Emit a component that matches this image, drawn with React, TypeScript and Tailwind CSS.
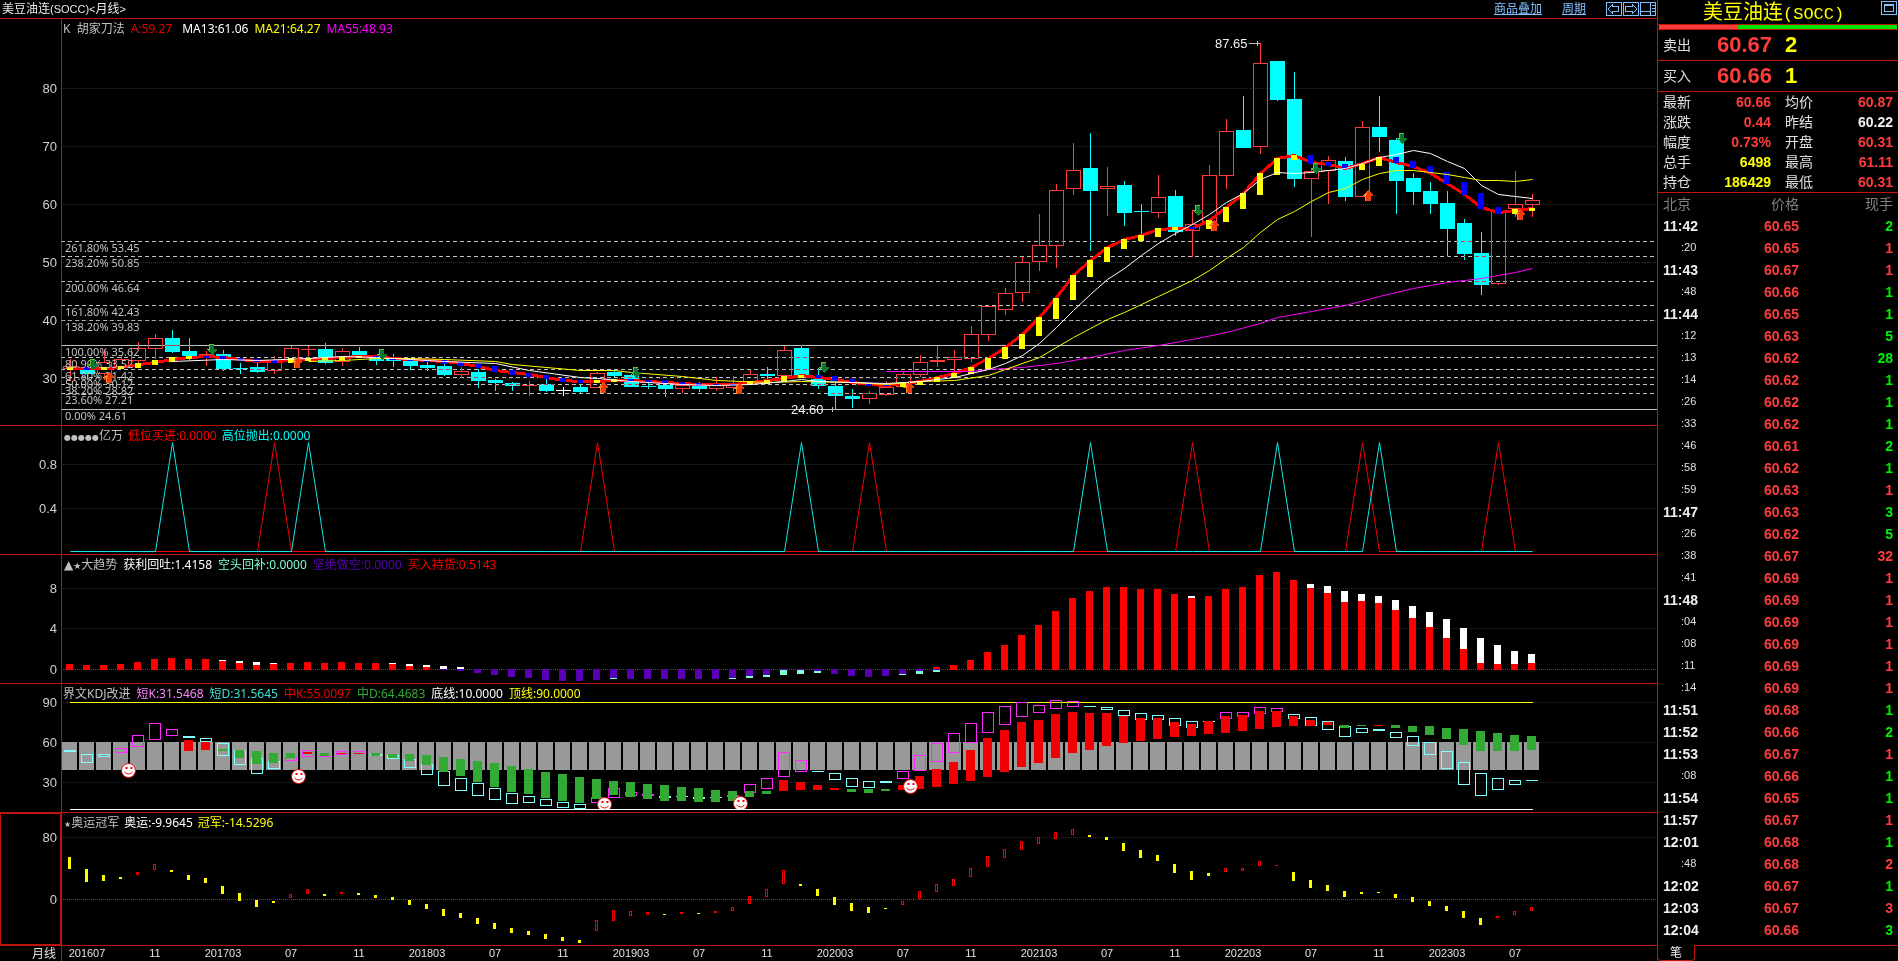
import React from "react";
import clsx from "clsx";

type Kind = "u" | "d" | "w";
type Candle = [number, number, number, number, Kind];
type Span = [number, number, string];
type Point = [number, number];

const STEP = 17;
const x = (i: number) => 70 + STEP * i;

// high, body top, body bottom, low
const candles: Candle[] = [
  [359, 366, 369, 381, "u"], [366, 369, 374, 380, "d"], [349, 362, 374, 380, "u"], [355, 359, 368, 368, "u"],
  [342, 348, 361, 364, "u"], [334, 338, 349, 359, "u"], [330, 338, 352, 353, "d"], [338, 351, 356, 360, "d"],
  [351, 354, 356, 366, "u"], [350, 354, 369, 371, "d"], [363, 368, 369, 374, "d"], [359, 367, 372, 373, "d"],
  [356, 362, 371, 374, "u"], [346, 348, 361, 362, "u"], [346, 349, 350, 358, "u"], [343, 349, 363, 364, "d"],
  [348, 351, 362, 366, "u"], [347, 351, 356, 356, "d"], [355, 355, 361, 365, "d"], [354, 359, 361, 367, "d"],
  [359, 359, 366, 370, "d"], [362, 365, 368, 371, "d"], [364, 366, 375, 376, "d"], [367, 371, 375, 378, "u"],
  [369, 372, 381, 388, "d"], [379, 380, 383, 391, "d"], [382, 383, 386, 391, "d"], [381, 385, 386, 396, "u"],
  [379, 384, 391, 392, "d"], [387, 390, 391, 396, "w"], [385, 387, 392, 393, "d"], [372, 373, 388, 388, "u"],
  [370, 372, 376, 377, "d"], [374, 375, 387, 387, "d"], [383, 386, 387, 389, "d"], [385, 385, 389, 397, "d"],
  [383, 385, 389, 393, "u"], [382, 385, 389, 392, "d"], [377, 385, 389, 391, "u"], [376, 385, 388, 391, "u"],
  [370, 374, 384, 385, "u"], [367, 374, 376, 381, "d"], [346, 350, 376, 378, "u"], [345, 348, 377, 378, "d"],
  [368, 379, 386, 389, "d"], [383, 386, 396, 409, "d"], [389, 396, 399, 408, "d"], [391, 393, 399, 404, "u"],
  [381, 387, 395, 396, "u"], [371, 374, 387, 388, "u"], [355, 362, 375, 377, "u"], [346, 360, 362, 367, "u"],
  [350, 357, 360, 373, "u"], [326, 334, 359, 362, "u"], [306, 306, 335, 341, "u"], [288, 293, 310, 315, "u"],
  [257, 262, 293, 302, "u"], [214, 245, 262, 271, "u"], [184, 190, 246, 268, "u"], [143, 170, 189, 195, "u"],
  [133, 168, 191, 251, "d"], [167, 186, 189, 216, "u"], [181, 185, 213, 226, "d"], [204, 211, 212, 235, "d"],
  [175, 197, 213, 218, "u"], [190, 196, 232, 236, "d"], [210, 224, 231, 257, "u"], [165, 175, 222, 227, "u"],
  [119, 131, 176, 189, "u"], [96, 130, 148, 148, "d"], [43, 63, 147, 154, "u"], [61, 61, 100, 101, "d"],
  [72, 99, 179, 187, "d"], [169, 171, 179, 237, "u"], [156, 160, 171, 204, "u"], [157, 161, 197, 201, "d"],
  [121, 127, 197, 197, "u"], [96, 127, 137, 152, "d"], [138, 140, 181, 214, "d"], [173, 178, 192, 205, "d"],
  [182, 191, 204, 214, "d"], [191, 203, 229, 257, "d"], [219, 223, 254, 260, "d"], [232, 253, 285, 295, "d"],
  [211, 211, 284, 285, "u"], [171, 204, 209, 217, "u"], [194, 200, 205, 217, "u"],
];

const trendLine = [
  368, 368, 368, 367, 364, 362, 359, 357, 356, 357, 359, 361, 361, 360, 359, 358, 357, 356, 356, 358, 359, 360, 361,
  363, 366, 370, 372, 374, 377, 380, 381, 381, 380, 380, 381, 382, 383, 384, 384, 384, 382, 380, 378, 375, 377, 379,
  382, 384, 385, 383, 381, 377, 373, 367, 358, 347, 334, 317, 297, 275, 260, 247, 239, 235, 229, 228, 228, 220, 207,
  193, 173, 158, 155, 162, 164, 168, 163, 157, 162, 166, 173, 183, 194, 207, 212, 210, 208,
];

const trendBars: Span[] = [
  [367, 369, "y"], [367, 369, "b"], [367, 369, "y"], [366, 368, "y"], [363, 367, "y"], [360, 364, "y"],
  [357, 361, "y"], [356, 358, "y"], [356, 357, "b"], [356, 359, "b"], [358, 360, "b"], [359, 361, "b"],
  [360, 362, "b"], [358, 362, "y"], [358, 360, "y"], [357, 359, "y"], [357, 359, "y"], [356, 357, "y"],
  [356, 358, "b"], [358, 359, "b"], [359, 360, "b"], [360, 361, "b"], [360, 363, "b"], [362, 365, "b"],
  [364, 367, "b"], [366, 371, "b"], [370, 374, "b"], [373, 376, "b"], [375, 378, "b"], [378, 381, "b"],
  [380, 382, "b"], [380, 382, "y"], [379, 381, "y"], [379, 381, "b"], [380, 382, "b"], [380, 383, "b"],
  [382, 384, "b"], [383, 385, "b"], [384, 385, "b"], [384, 385, "b"], [381, 384, "y"], [380, 383, "y"],
  [376, 380, "y"], [375, 377, "y"], [375, 377, "b"], [376, 380, "b"], [379, 382, "b"], [382, 385, "b"],
  [384, 385, "b"], [383, 386, "y"], [381, 384, "y"], [377, 381, "y"], [373, 377, "y"], [367, 373, "y"],
  [358, 368, "y"], [347, 358, "y"], [334, 348, "y"], [317, 335, "y"], [298, 318, "y"], [275, 299, "y"],
  [260, 276, "y"], [247, 261, "y"], [239, 248, "y"], [235, 240, "y"], [228, 236, "y"], [227, 229, "y"],
  [227, 228, "b"], [220, 228, "y"], [207, 221, "y"], [193, 208, "y"], [173, 194, "y"], [158, 174, "y"],
  [155, 159, "y"], [155, 163, "b"], [162, 165, "b"], [164, 168, "b"], [164, 169, "y"], [157, 165, "y"],
  [157, 162, "b"], [161, 167, "b"], [166, 172, "b"], [172, 183, "b"], [182, 194, "b"], [193, 208, "b"],
  [207, 213, "b"], [209, 213, "y"], [208, 210, "y"],
];

const ma13: Point[] = [
  [6, 361], [9, 359], [11, 360], [14, 358], [16, 356], [18, 357], [20, 359], [22, 361], [25, 363], [27, 370],
  [30, 377], [31, 378], [33, 381], [36, 384], [38, 385], [40, 384], [42, 381], [43, 379], [44, 381], [46, 382],
  [48, 383], [50, 381], [52, 377], [54, 369], [55, 363], [56, 355], [57, 343], [58, 327], [59, 310], [60, 294],
  [61, 279], [62, 268], [63, 255], [64, 243], [65, 233], [66, 224], [67, 214], [68, 202], [69, 193], [70, 179],
  [71, 172], [72, 173], [73, 172], [74, 170], [75, 168], [76, 163], [77, 157], [78, 154], [79, 150], [80, 153],
  [81, 161], [82, 168], [83, 185], [84, 194], [85, 196], [86, 198],
];
const ma21: Point[] = [
  [14, 361], [16, 360], [18, 358], [20, 358], [22, 359], [25, 361], [26, 364], [30, 370], [32, 370], [33, 372],
  [36, 376], [38, 380], [41, 382], [43, 381], [46, 382], [48, 384], [50, 381], [52, 380], [54, 375], [55, 369],
  [57, 357], [58, 347], [59, 337], [60, 328], [61, 319], [62, 312], [63, 304], [64, 296], [65, 288], [66, 280],
  [67, 270], [68, 258], [69, 247], [70, 232], [71, 219], [72, 211], [73, 201], [74, 192], [75, 188], [76, 179],
  [77, 173], [78, 170], [79, 170], [80, 172], [81, 174], [82, 177], [83, 180], [84, 180], [85, 181], [86, 179],
];
const ma55: Point[] = [
  [48, 371], [53, 371], [54, 369], [56, 367], [58, 363], [60, 357], [62, 350], [64, 345], [66, 339], [68, 332],
  [70, 323], [71, 317], [73, 311], [75, 305], [77, 296], [79, 288], [81, 282], [83, 278], [85, 272], [86, 268],
];

const fibs: [number, string][] = [
  [241, "261.80% 53.45"], [256, "238.20% 50.85"], [281, "200.00% 46.64"], [305, "161.80% 42.43"],
  [320, "138.20% 39.83"], [345, "100.00% 35.62"], [357, "80.90% 33.52"], [369, "61.80% 31.42"],
  [377, "50.00% 30.12"], [384, "38.20% 28.82"], [393, "23.60% 27.21"], [409, "0.00% 24.61"],
];

const sells: Point[] = [[93, 364], [212, 349], [382, 354], [636, 372], [824, 367], [1198, 210], [1316, 168], [1402, 138]];
const buys: Point[] = [[109, 378], [297, 363], [603, 388], [739, 389], [909, 388], [1214, 226], [1368, 196], [1520, 215]];

const highSignals = [6, 14, 43, 60, 71, 77];
const lowSignals = [12, 31, 47, 66, 76, 84];

// white top, red top
const rises: [number, number, number][] = [
  [0, 664, 664], [1, 665, 665], [2, 665, 665], [3, 664, 664], [4, 662, 662], [5, 659, 659], [6, 658, 658],
  [7, 659, 659], [8, 659, 659], [9, 660, 661], [10, 661, 663], [11, 662, 665], [12, 663, 664], [13, 663, 663],
  [14, 662, 662], [15, 663, 663], [16, 662, 662], [17, 663, 663], [18, 663, 663], [19, 663, 664], [20, 664, 666],
  [21, 665, 667], [22, 666, 669], [23, 667, 669], [51, 667, 667], [52, 665, 665], [53, 660, 660], [54, 652, 652],
  [55, 645, 645], [56, 635, 635], [57, 625, 625], [58, 611, 611], [59, 598, 598], [60, 591, 591], [61, 587, 587],
  [62, 587, 587], [63, 589, 589], [64, 589, 589], [65, 594, 594], [66, 596, 598], [67, 596, 596], [68, 589, 589],
  [69, 587, 587], [70, 575, 575], [71, 572, 572], [72, 580, 580], [73, 584, 588], [74, 586, 593], [75, 591, 602],
  [76, 594, 601], [77, 596, 603], [78, 600, 610], [79, 606, 618], [80, 612, 627], [81, 619, 638], [82, 628, 649],
  [83, 638, 663], [84, 645, 664], [85, 651, 664], [86, 654, 663],
];
// purple bottom, green bottom
const falls: [number, number, number][] = [
  [22, 670, 670], [23, 671, 671], [24, 673, 673], [25, 675, 675], [26, 677, 677], [27, 678, 678], [28, 680, 680],
  [29, 681, 681], [30, 681, 681], [31, 680, 680], [32, 678, 679], [33, 679, 679], [34, 679, 679], [35, 679, 679],
  [36, 679, 679], [37, 679, 679], [38, 679, 679], [39, 678, 679], [40, 676, 678], [41, 675, 677], [42, 670, 675],
  [43, 670, 674], [44, 671, 673], [45, 674, 674], [46, 676, 676], [47, 677, 677], [48, 676, 676], [49, 674, 675],
  [50, 671, 674], [51, 670, 672],
];

const shortKd: Span[] = [
  [750, 752, "c"], [754, 763, "c"], [754, 757, "c"], [748, 753, "m"], [735, 747, "m"], [723, 740, "m"],
  [729, 736, "m"], [736, 738, "c"], [738, 742, "c"], [743, 756, "c"], [750, 765, "c"], [758, 774, "c"],
  [761, 769, "c"], [757, 761, "m"], [750, 757, "m"], [756, 757, "m"], [751, 755, "m"], [751, 754, "m"],
  [754, 756, "c"], [755, 759, "c"], [759, 768, "c"], [764, 775, "c"], [771, 786, "c"], [778, 791, "c"],
  [783, 796, "c"], [788, 800, "c"], [793, 804, "c"], [796, 803, "c"], [799, 806, "c"], [802, 808, "c"],
  [804, 809, "c"], [797, 803, "m"], [788, 798, "m"], [792, 796, "m"], [794, 796, "m"], [796, 798, "c"],
  [796, 797, "c"], [797, 799, "c"], [797, 798, "c"], [795, 797, "m"], [784, 793, "m"], [778, 789, "m"],
  [752, 777, "m"], [760, 772, "m"], [771, 772, "c"], [773, 780, "c"], [778, 787, "c"], [781, 788, "c"],
  [781, 783, "c"], [771, 779, "m"], [755, 771, "m"], [743, 762, "m"], [733, 753, "m"], [723, 743, "m"],
  [712, 733, "m"], [706, 725, "m"], [702, 717, "m"], [705, 713, "m"], [700, 709, "m"], [701, 707, "m"],
  [706, 707, "c"], [707, 710, "c"], [710, 716, "c"], [713, 720, "c"], [715, 720, "c"], [718, 726, "c"],
  [721, 728, "c"], [721, 722, "c"], [712, 719, "m"], [712, 717, "m"], [707, 714, "m"], [708, 712, "m"],
  [714, 719, "c"], [717, 726, "c"], [721, 730, "c"], [726, 737, "c"], [728, 733, "c"], [729, 731, "c"],
  [732, 738, "c"], [736, 746, "c"], [742, 755, "c"], [751, 769, "c"], [762, 785, "c"], [773, 796, "c"],
  [778, 790, "c"], [780, 785, "c"], [780, 781, "c"],
];

// starts at the 8th month
const midKd: Span[] = [
  [740, 751, "r"], [742, 750, "r"], [749, 751, "g"], [750, 758, "g"], [751, 764, "g"], [753, 763, "g"],
  [753, 758, "g"], [752, 754, "r"], [753, 756, "g"], [753, 754, "r"], [753, 754, "r"], [753, 756, "g"],
  [754, 758, "g"], [754, 761, "g"], [755, 765, "g"], [757, 772, "g"], [759, 776, "g"], [761, 782, "g"],
  [763, 787, "g"], [766, 792, "g"], [769, 794, "g"], [772, 798, "g"], [774, 801, "g"], [777, 803, "g"],
  [779, 799, "g"], [781, 795, "g"], [782, 797, "g"], [784, 799, "g"], [785, 801, "g"], [787, 801, "g"],
  [788, 802, "g"], [790, 802, "g"], [791, 801, "g"], [791, 797, "g"], [791, 794, "g"], [780, 791, "r"],
  [782, 790, "r"], [785, 790, "r"], [788, 790, "r"], [789, 792, "g"], [789, 793, "g"], [789, 791, "g"],
  [785, 790, "r"], [776, 789, "r"], [769, 787, "r"], [762, 784, "r"], [750, 781, "r"], [738, 777, "r"],
  [730, 772, "r"], [722, 767, "r"], [720, 763, "r"], [714, 758, "r"], [712, 753, "r"], [713, 750, "r"],
  [713, 746, "r"], [716, 743, "r"], [718, 741, "r"], [718, 739, "r"], [722, 737, "r"], [724, 736, "r"],
  [721, 734, "r"], [716, 733, "r"], [715, 731, "r"], [711, 729, "r"], [711, 727, "r"], [716, 726, "r"],
  [720, 726, "r"], [722, 725, "r"], [725, 728, "g"], [725, 726, "g"], [725, 726, "r"], [725, 728, "g"],
  [726, 732, "g"], [726, 735, "g"], [728, 739, "g"], [729, 745, "g"], [731, 751, "g"], [733, 751, "g"],
  [735, 751, "g"], [736, 750, "g"],
];

const smileys: Point[] = [[128, 770], [298, 776], [604, 804], [740, 803], [910, 786]];

const champion: Span[] = [
  [857, 869, "y"], [869, 882, "y"], [875, 881, "y"], [877, 879, "y"], [872, 875, "r"], [864, 870, "r"],
  [870, 872, "y"], [875, 880, "y"], [878, 883, "y"], [886, 894, "y"], [893, 901, "y"], [900, 907, "y"],
  [901, 903, "y"], [894, 898, "r"], [889, 894, "r"], [894, 896, "y"], [892, 894, "r"], [893, 895, "y"],
  [895, 898, "y"], [897, 900, "y"], [900, 905, "y"], [904, 909, "y"], [909, 916, "y"], [913, 918, "y"],
  [918, 924, "y"], [923, 929, "y"], [928, 933, "y"], [931, 935, "y"], [934, 939, "y"], [937, 941, "y"],
  [940, 943, "y"], [920, 931, "r"], [910, 921, "r"], [911, 916, "r"], [912, 915, "r"], [914, 915, "y"],
  [912, 914, "r"], [913, 914, "y"], [911, 913, "r"], [907, 911, "r"], [896, 904, "r"], [889, 897, "r"],
  [870, 884, "r"], [884, 886, "y"], [889, 896, "y"], [897, 905, "y"], [903, 911, "y"], [907, 913, "y"],
  [908, 909, "y"], [901, 905, "r"], [891, 899, "r"], [884, 892, "r"], [879, 886, "r"], [868, 877, "r"],
  [856, 867, "r"], [849, 858, "r"], [841, 850, "r"], [837, 844, "r"], [832, 839, "r"], [829, 835, "r"],
  [835, 837, "y"], [837, 840, "y"], [843, 851, "y"], [850, 858, "y"], [855, 861, "y"], [864, 873, "y"],
  [871, 880, "y"], [873, 876, "y"], [868, 872, "r"], [868, 871, "r"], [861, 866, "r"], [865, 866, "r"],
  [872, 881, "y"], [880, 888, "y"], [885, 891, "y"], [891, 897, "y"], [892, 894, "y"], [892, 893, "y"],
  [894, 898, "y"], [897, 902, "y"], [901, 906, "y"], [906, 911, "y"], [911, 918, "y"], [918, 925, "y"],
  [916, 918, "r"], [911, 915, "r"], [907, 911, "r"],
];

const quotes = [
  ["最新", "60.66", "text-[#ff3c3c]", "均价", "60.87", "text-[#ff3c3c]"],
  ["涨跌", "0.44", "text-[#ff3c3c]", "昨结", "60.22", "text-[#f0f0f0]"],
  ["幅度", "0.73%", "text-[#ff3c3c]", "开盘", "60.31", "text-[#ff3c3c]"],
  ["总手", "6498", "text-[#ffff00]", "最高", "61.11", "text-[#ff3c3c]"],
  ["持仓", "186429", "text-[#ffff00]", "最低", "60.31", "text-[#ff3c3c]"],
];

// time, price, volume, side
const ticks: [string, string, number, "b" | "s"][] = [
  ["11:42", "60.65", 2, "s"], [":20", "60.65", 1, "b"], ["11:43", "60.67", 1, "b"], [":48", "60.66", 1, "s"],
  ["11:44", "60.65", 1, "s"], [":12", "60.63", 5, "s"], [":13", "60.62", 28, "s"], [":14", "60.62", 1, "s"],
  [":26", "60.62", 1, "s"], [":33", "60.62", 1, "s"], [":46", "60.61", 2, "s"], [":58", "60.62", 1, "s"],
  [":59", "60.63", 1, "b"], ["11:47", "60.63", 3, "s"], [":26", "60.62", 5, "s"], [":38", "60.67", 32, "b"],
  [":41", "60.69", 1, "b"], ["11:48", "60.69", 1, "b"], [":04", "60.69", 1, "b"], [":08", "60.69", 1, "b"],
  [":11", "60.69", 1, "b"], [":14", "60.69", 1, "b"], ["11:51", "60.68", 1, "s"], ["11:52", "60.66", 2, "s"],
  ["11:53", "60.67", 1, "b"], [":08", "60.66", 1, "s"], ["11:54", "60.65", 1, "s"], ["11:57", "60.67", 1, "b"],
  ["12:01", "60.68", 1, "s"], [":48", "60.68", 2, "b"], ["12:02", "60.67", 1, "s"], ["12:03", "60.67", 3, "b"],
  ["12:04", "60.66", 3, "s"],
];

const path = (points: Point[]) => points.map(([i, y]) => `${x(i) + 0.5},${y + 0.5}`).join(" ");

const spikes = (signals: number[]) =>
  path(candles.map((_, i) => [i, signals.includes(i) ? 442 : 551] as Point));

const months = Array.from({ length: 22 }, (_, k) => ({
  i: 1 + 4 * k,
  label: k === 0 ? "201607" : k % 3 === 0 ? "07" : k % 3 === 1 ? "11" : `${2017 + (k - 2) / 3}03`,
}));

const Box = ({ left, top, width, height, color }: { left: number; top: number; width: number; height: number; color: string }) =>
  height > 2 ? (
    <rect x={left + 0.5} y={top + 0.5} width={width - 1} height={height - 1} fill="none" stroke={color} />
  ) : (
    <rect x={left} y={top} width={width} height={height} fill={color} />
  );

const Legend = ({ items }: { items: [string, string][] }) => (
  <div className="absolute left-[63px] top-0.5 flex gap-1.5 whitespace-nowrap leading-4">
    {items.map(([text, color]) => (
      <span key={text} className={color}>
        {text}
      </span>
    ))}
  </div>
);

const Panel = ({
  top,
  className,
  grid,
  legend,
  children,
}: {
  top: number;
  className: string;
  grid: [number, string, boolean?][];
  legend: React.ReactNode;
  children: React.ReactNode;
}) => (
  <section className="relative border-t border-[#be1409]">
    <svg className={clsx("block w-full", className)} shapeRendering="crispEdges">
      <g transform={`translate(0,${-top})`}>
        {grid.map(([y, label, bright]) => (
          <g key={label}>
            <line x1="63" x2="100%" y1={y + 0.5} y2={y + 0.5} stroke={bright ? "#d01810" : "#8c0000"} strokeDasharray="1 1" />
            <text x="57" y={y + 5} textAnchor="end" className="fill-[#d0d0d0] font-['Liberation_Sans'] text-[13px]">
              {label}
            </text>
          </g>
        ))}
        <line x1="61.5" x2="61.5" y1={top} y2={top + 420} stroke="#be1409" />
        {children}
      </g>
    </svg>
    {legend}
  </section>
);

const PriceChart = () => (
  <Panel
    top={19}
    className="h-[406px]"
    grid={[[88, "80"], [146, "70"], [204, "60"], [262, "50"], [320, "40"], [378, "30"]]}
    legend={
      <Legend
        items={[
          ["K  胡家刀法", "whitespace-pre text-[#c0c0c0]"],
          ["A:59.27", "text-[#e00000] pr-1"],
          ["MA13:61.06", "text-white"],
          ["MA21:64.27", "text-[#ffff00]"],
          ["MA55:48.93", "text-[#ff00ff]"],
        ]}
      />
    }
  >
    {candles.map(([high, top, bottom, low, kind], i) => {
      const color = kind === "u" ? "#ff3c3c" : kind === "d" ? "#00ffff" : "#ffffff";
      return (
        <g key={i}>
          <rect x={x(i)} y={high} width="1" height={Math.max(top - high, 0)} fill={color} />
          <rect x={x(i)} y={bottom} width="1" height={Math.max(low - bottom, 0)} fill={color} />
          {kind === "u" ? (
            <Box left={x(i) - 7} top={top} width={15} height={bottom - top} color={color} />
          ) : (
            <rect x={x(i) - 7} y={top} width="15" height={bottom - top} fill={color} />
          )}
        </g>
      );
    })}
    <g className="mix-blend-difference">
      {fibs.map(([y]) => (
        <line
          key={y}
          x1="61"
          x2="100%"
          y1={y + 0.5}
          y2={y + 0.5}
          stroke="#c0c0c0"
          strokeDasharray={y === 345 || y === 409 ? undefined : "4 3"}
        />
      ))}
    </g>
    <polyline points={path(trendLine.map((y, i) => [i, y] as Point))} fill="none" stroke="#ff0000" strokeWidth="3" />
    {trendBars.map(([top, bottom, c], i) => (
      <rect key={i} x={x(i) - 3} y={top} width="6" height={bottom - top + 1} fill={c === "y" ? "#ffff00" : "#0000ff"} />
    ))}
    <g fill="none" shapeRendering="auto">
      <polyline points={path(ma55)} stroke="#ff00ff" />
      <polyline points={path(ma21)} stroke="#ffff00" />
      <polyline points={path(ma13)} stroke="#ffffff" />
    </g>
    {fibs.map(([y, label]) => (
      <text key={label} x="65" y={y + 11} className="fill-[#c0c0c0] text-[11px]">
        {label}
      </text>
    ))}
    {sells.map(([cx, cy]) => (
      <g key={cx} transform={`translate(${cx},${cy})`}>
        <path d="M-3 -5h5v5h3v1l-5 5l-5 -5v-1h2z" fill="#0a7832" />
        <path d="M-3 -5h5v1h-4v5h-1l1 2l-3 -2v-1h2z" fill="#6cbe28" />
      </g>
    ))}
    {buys.map(([cx, cy]) => (
      <g key={cx} transform={`translate(${cx},${cy})`}>
        <path d="M-3 5h6v-5h2v-1l-5 -5l-5 5v1h2z" fill="#f03c0a" />
        <path d="M-3 5h1v-6h2l-2 -1l2 -3l-5 4v1h2z" fill="#ff8c1e" />
      </g>
    ))}
    <g className="fill-[#f0f0f0] font-['Liberation_Sans'] text-[13px]">
      <text x="1215" y="48">87.65</text>
      <text x="791" y="414">24.60</text>
    </g>
    <path d="M1249 43.5h11M1257.5 41v5M832.5 407v5" stroke="#c0c0c0" />
  </Panel>
);

const SignalChart = () => (
  <Panel
    top={426}
    className="h-[128px]"
    grid={[[464, "0.8"], [508, "0.4"]]}
    legend={
      <div className="absolute left-[64px] top-0.5 flex gap-[5px] whitespace-nowrap leading-4">
        <span className="text-[#c0c0c0]">
          <span className="font-['DejaVu_Sans'] text-[8px]">●●●●●</span>亿万
        </span>
        <span className="text-[#ff0000]">低位买进:0.0000</span>
        <span className="text-[#00ffff]">高位抛出:0.0000</span>
      </div>
    }
  >
    <g fill="none" shapeRendering="auto">
      <polyline points={spikes(lowSignals)} stroke="#f00000" />
      <polyline points={spikes(highSignals)} stroke="#14e6e6" />
    </g>
  </Panel>
);

const TrendChart = () => (
  <Panel
    top={555}
    className="h-[128px]"
    grid={[[588, "8"], [628, "4"], [669, "0", true]]}
    legend={
      <div className="absolute left-[64px] top-0.5 flex gap-1.5 whitespace-nowrap leading-4">
        <span className="text-[#c0c0c0]">
          <span className="font-['DejaVu_Sans']">▲</span>
          <span className="font-['DejaVu_Sans'] text-[9px]">★</span>大趋势
        </span>
        <span className="text-white">获利回吐:1.4158</span>
        <span className="text-[#7fffd4]">空头回补:0.0000</span>
        <span className="text-[#5a00b4]">坚绝做空:0.0000</span>
        <span className="text-[#ff0000]">买入持货:0.5143</span>
      </div>
    }
  >
    {rises.map(([i, white, red]) => (
      <g key={i}>
        <rect x={x(i) - 4} y={white} width="7" height={red - white} fill="#ffffff" />
        <rect x={x(i) - 4} y={red} width="7" height={670 - red} fill="#ff0000" />
      </g>
    ))}
    {falls.map(([i, purple, green]) => (
      <g key={i}>
        <rect x={x(i) - 4} y="669" width="7" height={purple - 669} fill="#5a00b4" />
        <rect x={x(i) - 4} y={purple} width="7" height={green - purple} fill="#7fffd4" />
      </g>
    ))}
  </Panel>
);

const KdjChart = () => (
  <Panel
    top={684}
    className="h-[128px]"
    grid={[[702, "90"], [742, "60"], [782, "30"]]}
    legend={
      <Legend
        items={[
          ["界文KDJ改进", "text-[#c0c0c0]"],
          ["短K:31.5468", "text-[#ff80ff]"],
          ["短D:31.5645", "text-[#40e0d0]"],
          ["中K:55.0097", "text-[#f00000]"],
          ["中D:64.4683", "text-[#33aa33]"],
          ["底线:10.0000", "text-white"],
          ["顶线:90.0000", "text-[#ffff00]"],
        ]}
      />
    }
  >
    {candles.map((_, i) => (
      <rect key={i} x={x(i) - 8} y="742" width="15" height="28" fill="#999999" />
    ))}
    <rect x="70" y="702" width="1463" height="1" fill="#ffff00" />
    {shortKd.map(([top, bottom, c], i) => (
      <Box key={i} left={x(i) - 6} top={top} width={12} height={bottom - top} color={c === "c" ? "#80ffff" : "#ff28ff"} />
    ))}
    {midKd.map(([top, bottom, c], n) => (
      <rect key={n} x={x(n + 7) - 5} y={top} width="9" height={bottom - top} fill={c === "r" ? "#f00000" : "#33aa33"} />
    ))}
    {smileys.map(([cx, cy]) => (
      <g key={cx} transform={`translate(${cx + 0.5},${cy + 0.5})`} shapeRendering="auto">
        <circle r="7" fill="#ffffff" stroke="#f00000" />
        <path d="M-3 -3.5h2v2h-2zM2 -3.5h2v2h-2z" fill="#f00000" />
        <path d="M-4 1.5q4 4 8 0" fill="none" stroke="#f00000" />
      </g>
    ))}
    <rect x="62" y="810" width="1500" height="2" fill="#000000" />
    <rect x="70" y="809" width="1463" height="1" fill="#ffffff" />
  </Panel>
);

const ChampionChart = () => (
  <Panel
    top={813}
    className="h-[132px]"
    grid={[[837, "80"], [899, "0", true]]}
    legend={
      <div className="absolute left-[64px] top-0.5 flex gap-[5px] whitespace-nowrap leading-4">
        <span className="text-[#c0c0c0]">
          <span className="font-['DejaVu_Sans'] text-[8px]">★</span>奥运冠军
        </span>
        <span className="text-white">奥运:-9.9645</span>
        <span className="text-[#ffff00]">冠军:-14.5296</span>
      </div>
    }
  >
    <rect x="0.5" y="813.5" width="60" height="131" fill="none" stroke="#be1409" />
    {champion.map(([top, bottom, c], i) =>
      c === "y" ? (
        <rect key={i} x={x(i) - 2} y={top} width="3" height={bottom - top} fill="#ffff00" />
      ) : (
        <Box key={i} left={x(i) - 2} top={top} width={3} height={bottom - top} color="#f00000" />
      )
    )}
  </Panel>
);

const TimeAxis = () => (
  <footer className="border-t border-[#be1409]">
    <svg className="block h-[15px] w-full text-[11px]">
      <line x1="61.5" x2="61.5" y1="0" y2="15" stroke="#be1409" />
      <text x="56" y="12" textAnchor="end" className="fill-[#e0e0e0] text-[12px]">
        月线
      </text>
      {months.map(({ i, label }) => (
        <text key={i} x={x(i)} y="11" textAnchor="middle" className="fill-[#e0e0e0] font-['Liberation_Sans']">
          {label}
        </text>
      ))}
    </svg>
  </footer>
);

const TitleBar = () => (
  <header className="flex h-[18px] items-center justify-between pl-0.5 pr-px text-[#e8e8e8]">
    <h1 className="font-['Liberation_Sans','Noto_Sans_CJK_SC',sans-serif] text-xs">
      美豆油连<span className="text-[11px]">(SOCC)&lt;</span>月线<span className="text-[11px]">&gt;</span>
    </h1>
    <nav className="flex items-center gap-5 text-[#80c0ff]">
      <a href="#overlay" className="underline">商品叠加</a>
      <a href="#period" className="underline">周期</a>
      <span className="flex gap-px">
        <button aria-label="Previous">
          <svg width="16" height="14" fill="none" stroke="currentColor" shapeRendering="crispEdges">
            <rect x="0.5" y="0.5" width="15" height="13" />
            <path d="M2.5 6.5l4 -4v2h6v5h-6v2l-4 -4z" />
          </svg>
        </button>
        <button aria-label="Next">
          <svg width="16" height="14" fill="none" stroke="currentColor" shapeRendering="crispEdges">
            <rect x="0.5" y="0.5" width="15" height="13" />
            <path d="M13.5 6.5l-4 -4v2h-7v5h7v2l4 -4z" />
          </svg>
        </button>
        <button aria-label="Layout">
          <svg width="16" height="14" fill="none" stroke="currentColor" shapeRendering="crispEdges">
            <rect x="0.5" y="0.5" width="15" height="13" />
            <path d="M10.5 1v12M1 9.5h9M12 3.5h3M12 6.5h3M12 9.5h3" />
          </svg>
        </button>
      </span>
    </nav>
  </header>
);

const Quote = ({ label, price, volume }: { label: string; price: string; volume: number }) => (
  <div className="flex h-[31px] items-center border-t border-[#be1409] pl-[5px] font-bold">
    <span className="w-[54px] text-sm font-normal text-[#e0e0e0]">{label}</span>
    <span className="w-[68px] text-[22px] text-[#ff3c3c]">{price}</span>
    <span className="text-[22px] text-[#ffff00]">{volume}</span>
  </div>
);

const Sidebar = () => (
  <aside className="flex w-[241px] shrink-0 flex-col border-l border-[#be1409] font-['Liberation_Sans','Noto_Sans_CJK_SC',sans-serif]">
    <div className="flex h-6 items-start justify-between pl-[45px] pr-px">
      <h2 className="text-xl leading-6 text-[#ffff00]">
        美豆油连<span className="font-['Liberation_Mono'] text-[17px]">(SOCC)</span>
      </h2>
      <button aria-label="Maximize" className="pt-px text-[#80c0ff]">
        <svg width="16" height="14" fill="none" stroke="currentColor" shapeRendering="crispEdges">
          <rect x="0.5" y="0.5" width="15" height="13" />
          <path d="M3.5 3.5h9v7h-9zM3.5 4.5h9" />
        </svg>
      </button>
    </div>
    <div className="flex h-[5px] border-t border-[#be1409] px-px">
      <div className="w-1/3 bg-[#ff3c3c]" />
      <div className="flex-1 bg-[#00e600]" />
    </div>
    <Quote label="卖出" price="60.67" volume={2} />
    <Quote label="买入" price="60.66" volume={1} />
    <dl className="border-y border-[#be1409] text-sm leading-5">
      {quotes.map(([label, value, color, label2, value2, color2]) => (
        <div key={label} className="flex pl-[5px] pr-[5px]">
          <dt className="w-12 text-[#e0e0e0]">{label}</dt>
          <dd className={clsx("w-[60px] text-right font-bold", color)}>{value}</dd>
          <dt className="ml-3.5 text-[#e0e0e0]">{label2}</dt>
          <dd className={clsx("flex-1 text-right font-bold", color2)}>{value2}</dd>
        </div>
      ))}
    </dl>
    <table className="w-full table-fixed text-sm font-bold">
      <thead>
        <tr className="h-[22px] text-[#808080]">
          <th className="w-[60px] pl-[5px] text-left font-normal">北京</th>
          <th className="w-[81px] text-right font-normal">价格</th>
          <th className="pr-[5px] text-right font-normal">现手</th>
        </tr>
      </thead>
      <tbody>
        {ticks.map(([time, price, volume, side], n) => (
          <tr key={n} className="h-[22px]">
            <td className={time.startsWith(":") ? "pl-[23px] text-[11px] font-normal text-[#e0e0e0]" : "pl-[5px] text-[#f0f0f0]"}>
              {time}
            </td>
            <td className="text-right text-[#ff3c3c]">{price}</td>
            <td className={clsx("pr-[5px] text-right", side === "s" ? "text-[#00f000]" : "text-[#ff3c3c]")}>{volume}</td>
          </tr>
        ))}
      </tbody>
    </table>
    <div className="mt-auto flex h-4">
      <button className="w-[37px] rounded-b border-b border-r border-[#be1409] text-xs leading-[14px] text-[#f0f0f0]">笔</button>
      <div className="flex-1 border-t border-[#be1409]" />
    </div>
  </aside>
);

export default function App() {
  return (
    <div className="flex min-h-screen bg-black font-['Noto_Sans','Noto_Sans_CJK_SC',sans-serif] text-xs">
      <main className="min-w-0 flex-1">
        <TitleBar />
        <PriceChart />
        <SignalChart />
        <TrendChart />
        <KdjChart />
        <ChampionChart />
        <TimeAxis />
      </main>
      <Sidebar />
    </div>
  );
}
